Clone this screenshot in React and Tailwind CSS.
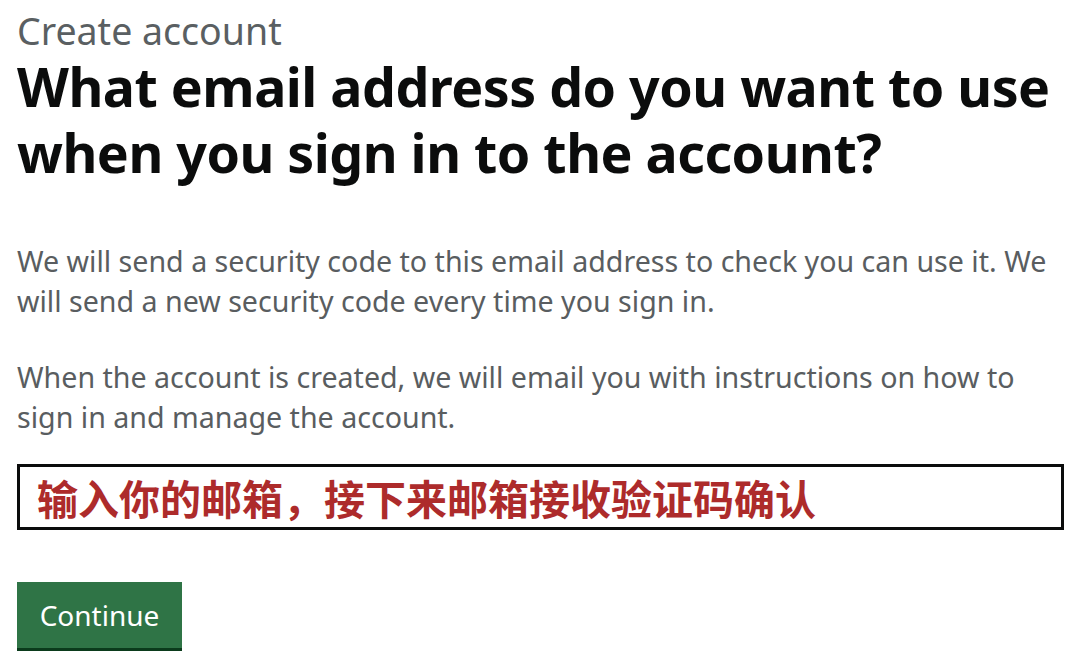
export default function App() {
  return (
    <div
      className="min-h-screen bg-white px-[17px] pt-[9px]"
      style={{ fontFamily: '"Noto Sans", "Liberation Sans", sans-serif' }}
    >
      <div className="text-[37.5px] leading-[44px] text-[#5a5f62]">Create account</div>

      <h1 className="mt-[1px] text-[53.7px] font-bold leading-[66px] tracking-[-0.5px] text-[#0b0c0c]">
        <span className="block whitespace-nowrap">What email address do you want to use</span>
        <span className="block whitespace-nowrap">when you sign in to the account?</span>
      </h1>

      <div className="mt-[55px] text-[28.6px] leading-[40px] text-[#595d60]">
        <p>
          <span className="block whitespace-nowrap">
            We will send a security code to this email address to check you can use it. We
          </span>
          <span className="block whitespace-nowrap">will send a new security code every time you sign in.</span>
        </p>
        <p className="mt-[36px]">
          <span className="block whitespace-nowrap">
            When the account is created, we will email you with instructions on how to
          </span>
          <span className="block whitespace-nowrap">sign in and manage the account.</span>
        </p>
      </div>

      <div className="mt-[27px] flex h-[66px] w-[1047px] items-center border-[3px] border-[#0b0c0c] bg-white pl-[17px]">
        <span
          className="text-[41px] font-bold leading-none text-[#ad2b2b]"
          style={{ fontFamily: '"Noto Sans CJK SC", "Noto Sans", sans-serif' }}
        >
          输入你的邮箱，接下来邮箱接收验证码确认
        </span>
      </div>

      <button className="mt-[52px] h-[66px] w-[165px] bg-[#2f7446] text-[28px] text-white shadow-[0_3px_0_#0b3b1c]">
        Continue
      </button>
    </div>
  )
}
